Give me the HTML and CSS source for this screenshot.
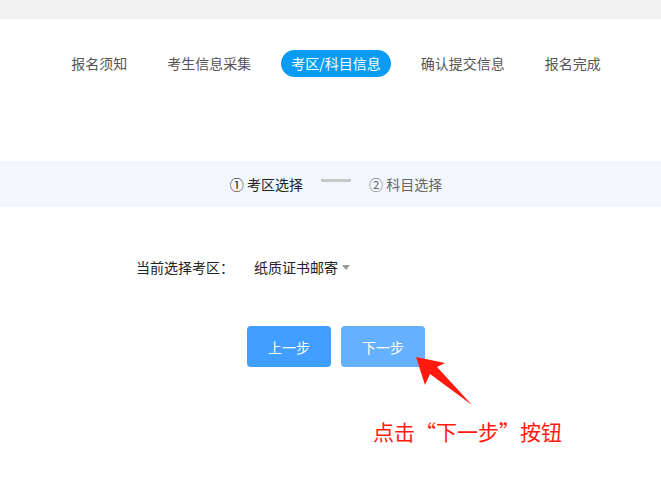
FILE: index.html
```html
<!DOCTYPE html>
<html lang="zh-CN">
<head>
    <meta charset="UTF-8">
    <title>报名 - 考区/科目信息</title>
    <link rel="stylesheet" href="styles.css">
</head>
<body>
    <div class="topbar"></div>
    <div class="page">
        <ul class="steps">
            <li>报名须知</li>
            <li>考生信息采集</li>
            <li class="active">考区/科目信息</li>
            <li>确认提交信息</li>
            <li>报名完成</li>
        </ul>

        <div class="substeps">
            <span class="sub current">① 考区选择</span>
            <span class="line"></span>
            <span class="sub">② 科目选择</span>
        </div>

        <div class="field">
            <label>当前选择考区：</label>
            <div class="select">纸质证书邮寄<i class="caret"></i></div>
        </div>

        <div class="actions">
            <button class="btn">上一步</button>
            <button class="btn next">下一步</button>
            <svg class="arrow" width="70" height="60" viewBox="0 0 70 60">
                <polygon points="1,1 30,7 22,11 57,49 15,18 10,29" fill="#ff1a0d"/>
            </svg>
        </div>

        <p class="hint">点击“下一步”按钮</p>
    </div>
</body>
</html>
```

FILE: styles.css
```css
body {
    margin: 0;
    background: #ffffff;
    font-family: "Noto Sans CJK SC", "Noto Sans", sans-serif;
    color: #333333;
}
.topbar {
    height: 19px;
    background-color: #f1f1f1;
}
.page {
    padding-left: 11px;
}
.steps {
    list-style: none;
    margin: 31px 0 0;
    padding: 0;
    display: flex;
    justify-content: center;
    gap: 20px;
}
.steps li {
    height: 27px;
    line-height: 27px;
    padding: 0 10px;
    font-size: 14px;
    color: #555555;
    border-radius: 14px;
}
.steps li.active {
    background-color: #0a9cf5;
    color: #ffffff;
}
.substeps {
    margin: 84px 0 0 -11px;
    padding-left: 11px;
    height: 46px;
    background-color: #f2f7fd;
    display: flex;
    justify-content: center;
    align-items: center;
    gap: 18px;
    font-size: 14px;
}
.sub {
    color: #666666;
}
.sub.current {
    color: #222222;
}
.line {
    width: 30px;
    height: 3px;
    background-color: #c8c8c8;
    margin-top: -8px;
}
.field {
    margin-top: 50px;
    padding-left: 125px;
    display: flex;
    align-items: center;
    font-size: 14px;
    height: 20px;
}
.field label {
    width: 118px;
    color: #222222;
}
.select {
    color: #222222;
    display: flex;
    align-items: center;
}
.caret {
    margin-left: 4px;
    width: 0;
    height: 0;
    border-left: 4px solid transparent;
    border-right: 4px solid transparent;
    border-top: 5px solid #999999;
}
.actions {
    position: relative;
    margin-top: 49px;
    display: flex;
    justify-content: center;
    gap: 10px;
}
.btn {
    width: 84px;
    height: 41px;
    border: none;
    border-radius: 4px;
    background-color: #409eff;
    color: #ffffff;
    font-family: inherit;
    font-size: 14px;
}
.btn.next {
    background-color: #66b1ff;
}
.arrow {
    position: absolute;
    left: 404px;
    top: 30px;
}
.hint {
    margin: 49px 0 0;
    padding-left: 362px;
    font-size: 21px;
    color: #ff1a0d;
}
```
